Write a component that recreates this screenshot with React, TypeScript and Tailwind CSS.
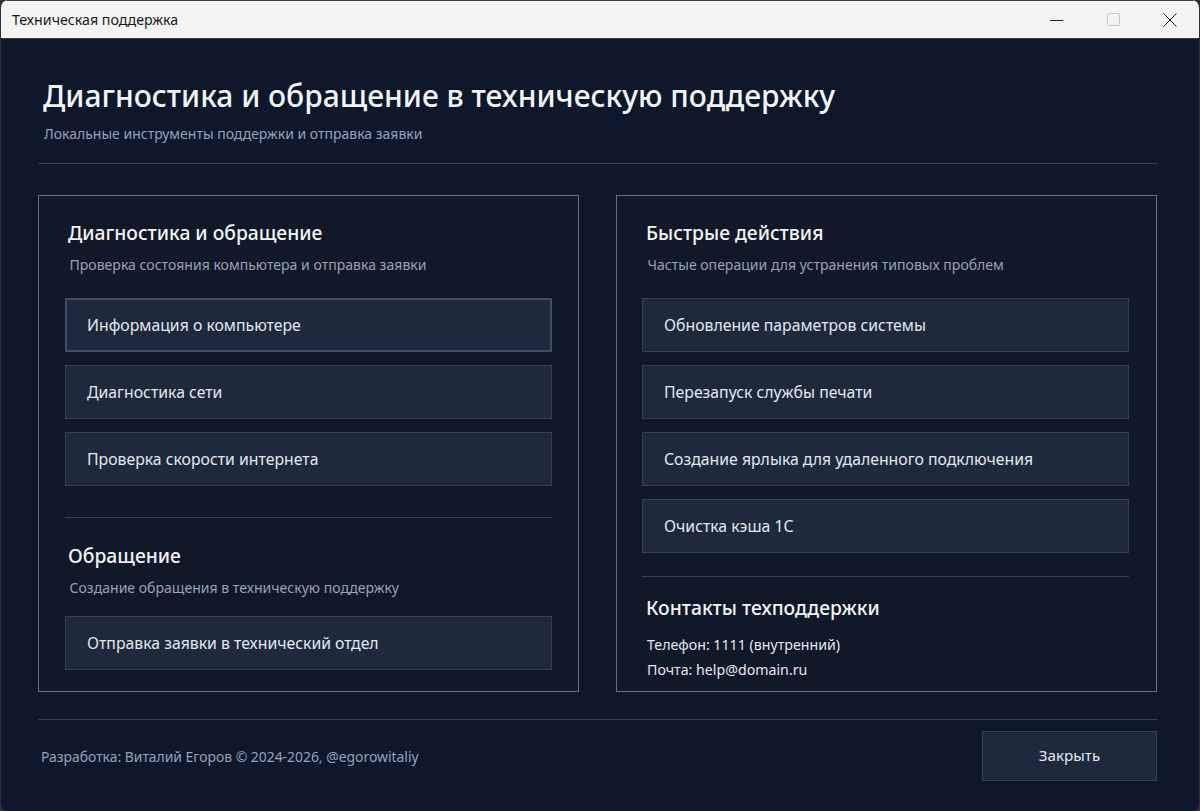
const ActionButton = ({ label, focused }: { label: string; focused?: boolean }) => (
  <button
    className={`block w-full h-[54px] shrink-0 bg-[#1e293b] text-left pt-[1px] text-[15.8px] text-[#e2e8f0] ${
      focused ? "border-2 border-[#3d4d64] pl-[20px]" : "border border-[#334155] pl-[21px]"
    }`}
  >
    {label}
  </button>
);

const SectionTitle = ({ title, sub, className }: { title: string; sub: string; className: string }) => (
  <div className={className}>
    <h2 className="text-[19.3px] leading-[26px] font-medium text-[#f1f5f9]">{title}</h2>
    <p className="mt-[9px] pl-[1.5px] text-[14.05px] leading-[20px] text-[#94a3b8]">{sub}</p>
  </div>
);

const App = () => {
  return (
    <div className="w-[1200px] h-[811px] bg-[#333] overflow-hidden font-['Noto_Sans',sans-serif]">
      <div className="w-full h-full flex flex-col rounded-t-[8px] rounded-b-[8px] overflow-hidden bg-[#0f172a] border-x border-[#2a2f38]">
        {/* Title bar */}
        <div className="h-[39px] shrink-0 flex items-center justify-between bg-[#f3f3f3] border-b border-[#3a3a3a] border-t">
          <span className="pl-[11px] pt-[1px] text-[14.2px] text-[#1a1a1a]">Техническая поддержка</span>
          <div className="flex items-center pr-[1px]">
            <div className="w-[57px] flex justify-center">
              <svg width="13" height="12" viewBox="0 0 13 12">
                <path d="M0 6.5h13" stroke="#222" strokeWidth="1" />
              </svg>
            </div>
            <div className="w-[56px] flex justify-center">
              <svg width="13" height="13" viewBox="0 0 13 13">
                <rect x="0.5" y="0.5" width="12" height="12" rx="1" fill="none" stroke="#c8c8c8" strokeWidth="1" />
              </svg>
            </div>
            <div className="w-[57px] flex justify-center">
              <svg width="14" height="14" viewBox="0 0 14 14">
                <path d="M0.5 0.5l13 13M13.5 0.5l-13 13" stroke="#222" strokeWidth="1" />
              </svg>
            </div>
          </div>
        </div>

        <div className="flex-1 flex flex-col pl-[37px] pr-[42px]">
          {/* Header */}
          <div className="pt-[35px] h-[125px] shrink-0 border-b border-[#334155]">
            <h1 className="pl-[5px] text-[30px] leading-[44px] font-medium text-[#f1f5f9]">
              Диагностика и обращение в техническую поддержку
            </h1>
            <p className="pl-[6px] mt-[6px] text-[14px] leading-[20px] text-[#94a3b8]">
              Локальные инструменты поддержки и отправка заявки
            </p>
          </div>

          {/* Panels */}
          <div className="mt-[31px] grid grid-cols-2 gap-x-[37px] h-[497px] shrink-0">
            <div className="bg-[#111827] border border-[#6b7078] pl-[26px] pr-[26px] flex flex-col">
              <SectionTitle
                className="pl-[3px] pt-[24px]"
                title="Диагностика и обращение"
                sub="Проверка состояния компьютера и отправка заявки"
              />
              <div className="mt-[23px] flex flex-col gap-[13px]">
                <ActionButton label="Информация о компьютере" focused />
                <ActionButton label="Диагностика сети" />
                <ActionButton label="Проверка скорости интернета" />
              </div>
              <div className="mt-[31px] h-px bg-[#334155]" />
              <SectionTitle
                className="pl-[3px] pt-[25px]"
                title="Обращение"
                sub="Создание обращения в техническую поддержку"
              />
              <div className="mt-[18px]">
                <ActionButton label="Отправка заявки в технический отдел" />
              </div>
            </div>

            <div className="bg-[#111827] border border-[#6b7078] pl-[25px] pr-[27px] flex flex-col">
              <SectionTitle
                className="pl-[4px] pt-[24px]"
                title="Быстрые действия"
                sub="Частые операции для устранения типовых проблем"
              />
              <div className="mt-[23px] flex flex-col gap-[13px]">
                <ActionButton label="Обновление параметров системы" />
                <ActionButton label="Перезапуск службы печати" />
                <ActionButton label="Создание ярлыка для удаленного подключения" />
                <ActionButton label="Очистка кэша 1С" />
              </div>
              <div className="mt-[23px] h-px bg-[#334155]" />
              <h2 className="pl-[4px] pt-[18px] text-[19.3px] leading-[26px] font-medium text-[#f1f5f9]">
                Контакты техподдержки
              </h2>
              <div className="pl-[5px] mt-[11px] text-[14.2px] leading-[25px] text-[#e2e8f0]">
                <p>Телефон: 1111 (внутренний)</p>
                <p>Почта: help@domain.ru</p>
              </div>
            </div>
          </div>

          {/* Footer */}
          <div className="mt-[27px] border-t border-[#334155] pt-[11px] flex items-center justify-between">
            <span className="pl-[3px] pt-[2px] text-[13.9px] text-[#94a3b8]">
              Разработка: Виталий Егоров © 2024-2026, @egorowitaliy
            </span>
            <button className="w-[175px] h-[50px] pb-[2px] bg-[#1e293b] border border-[#334155] text-[15.2px] text-[#e2e8f0]">
              Закрыть
            </button>
          </div>
        </div>
      </div>
    </div>
  );
};

export default App;
